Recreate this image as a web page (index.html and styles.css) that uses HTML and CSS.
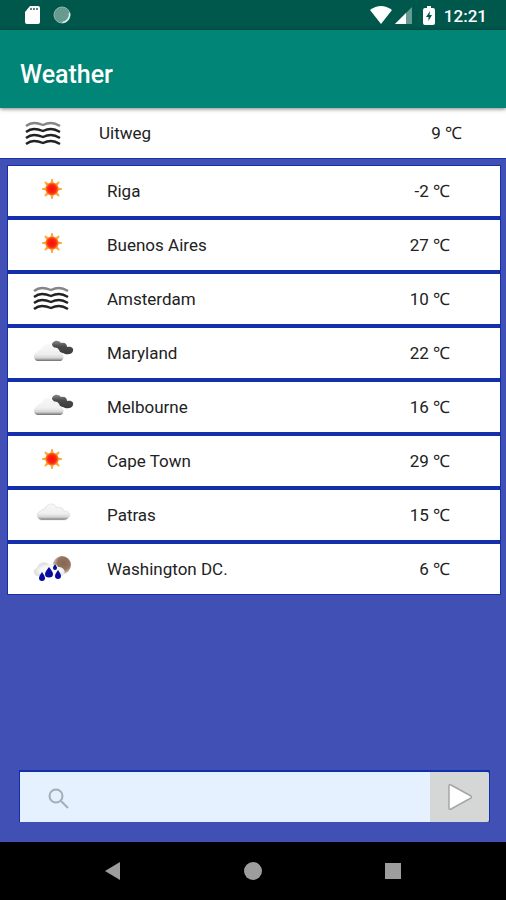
FILE: index.html
```html
<!DOCTYPE html>
<html lang="en">
<head>
<meta charset="utf-8">
<meta name="viewport" content="width=device-width, initial-scale=1">
<title>Weather</title>
<link rel="stylesheet" href="styles.css">
</head>
<body>
<svg class="defs" width="0" height="0" aria-hidden="true">
  <defs>
    <linearGradient id="cloudFill" x1="0" y1="0" x2="0" y2="1">
      <stop offset="0" stop-color="#f8f8f8"/><stop offset=".6" stop-color="#efefef"/><stop offset=".82" stop-color="#d4d4d4"/><stop offset="1" stop-color="#6e6e6e"/>
    </linearGradient>
    <linearGradient id="darkFill" x1="0" y1="0" x2="0" y2="1">
      <stop offset="0" stop-color="#8a8a8a"/><stop offset=".4" stop-color="#4c4c4c"/><stop offset="1" stop-color="#3a3a3a"/>
    </linearGradient>
    <radialGradient id="sunFill"><stop offset="0" stop-color="#f80d08"/><stop offset=".65" stop-color="#fb2a10"/><stop offset="1" stop-color="#ff8a1c"/></radialGradient>
    <radialGradient id="moonFill" cx=".6" cy=".4"><stop offset="0" stop-color="#846552"/><stop offset=".7" stop-color="#96745f"/><stop offset="1" stop-color="#bfa899"/></radialGradient>
    <radialGradient id="puffFill" cx=".55" cy=".6"><stop offset="0" stop-color="#fff"/><stop offset=".7" stop-color="#f5f5f5"/><stop offset="1" stop-color="#e2e2e2"/></radialGradient>
    <symbol id="mist" viewBox="0 0 44 30">
      <g fill="none" stroke="#222" stroke-width="2.400">
        <path stroke="#858585" d="M4 8Q8 5 12 5T21 7Q25 5 29 5T38 8"/>
        <path d="M4 14Q8 11 12 11T21 13Q25 11 29 11T38 14"/>
        <path d="M4 20Q8 17 12 17T21 19Q25 17 29 17T38 20"/>
        <path d="M4 26Q8 23 12 23T21 25Q25 23 29 23T38 26"/>
      </g>
    </symbol>
    <symbol id="sun" viewBox="0 0 44 30">
      <g fill="#f9a63c" stroke="#f9a63c" stroke-linejoin="round">
        <path id="ray" d="M22 4l1.500 5h-3z"/>
        <use href="#ray" transform="rotate(45 22 14)"/><use href="#ray" transform="rotate(90 22 14)"/>
        <use href="#ray" transform="rotate(135 22 14)"/><use href="#ray" transform="rotate(180 22 14)"/>
        <use href="#ray" transform="rotate(225 22 14)"/><use href="#ray" transform="rotate(270 22 14)"/>
        <use href="#ray" transform="rotate(315 22 14)"/>
      </g>
      <circle cx="22" cy="14" r="6.500" fill="url(#sunFill)"/>
    </symbol>
    <symbol id="overcast" viewBox="0 0 44 30">
      <path fill="url(#darkFill)" d="M22 8c0-4 6-6 9-2 4-1 6 1 6 4 4-1 7 1 6 4-1 4-7 4-10 2-3 0-5-2-6-5-3 0-5-1-5-3z"/>
      <path fill="url(#cloudFill)" d="M7 24c-4-1-4-8 0-9 1-2 3-3 5-3 1-6 10-7 12-1 3-1 5 1 6 4 4 1 5 7 1 9z"/>
    </symbol>
    <symbol id="cloud" viewBox="0 0 44 30">
      <path fill="url(#cloudFill)" stroke="#d8d8d8" stroke-width=".6" d="M11 21c-5-1-5-8 0-9 1-2 3-2 4-2 1-6 10-7 12-1 3-2 6 0 7 3 5 0 7 3 5 6-1 2-3 3-5 3z"/>
    </symbol>
    <symbol id="rain" viewBox="0 0 44 30">
      <g transform="translate(0 2)">
        <circle cx="32" cy="10" r="9" fill="url(#moonFill)"/>
        <path fill="url(#puffFill)" d="M8 21c-5 0-6-7-1-8 1-6 9-8 13-3 3-2 7-1 8 2 5-1 9 5 5 8-2 2-5 1-7 1z"/>
        <g fill="#080b9b">
          <path d="M19 12q4 5 4 7a4 3.500 0 0 1-8 0q0-2 4-7z"/>
          <path d="M12 17q3 4 3 6a3 3 0 0 1-6 0q0-2 3-6z"/>
          <path d="M28 15q3 4 3 6a3 3 0 0 1-6 0q0-2 3-6z"/>
          <path d="M25 9q2 3 2 4a2 2 0 0 1-4 0q0-1 2-4z"/>
        </g>
      </g>
    </symbol>
  </defs>
</svg>

<div class="status">
  <svg width="16" height="20" viewBox="0 0 16 20" aria-hidden="true"><path fill="#fff" d="M6 1h8q2 0 2 2v14q0 2-2 2H3q-2 0-2-2V7z"/><path stroke="#60857d" stroke-width="2" stroke-dasharray="2 1" d="M6 4h8"/></svg>
  <svg class="sync" width="18" height="18" viewBox="0 0 18 18" aria-hidden="true"><circle cx="9" cy="9" r="8" fill="#689b90" stroke="#8fb5ad"/><path d="M16.500 7a8 8 0 0 1-7 9.500" fill="none" stroke="#e6f2ef" stroke-width="1.500"/></svg>
  <span class="spacer"></span>
  <svg width="22" height="18" viewBox="0 0 22 18" aria-hidden="true"><path fill="#fff" d="M0 4Q11-4 22 4L11 18z"/></svg>
  <svg class="signal" width="17" height="17" viewBox="0 0 17 17" aria-hidden="true"><path fill="#659b91" d="M17 0v17H0z"/><path fill="#fff" d="M11 6v11H0z"/></svg>
  <svg class="battery" width="12" height="19" viewBox="0 0 12 19" aria-hidden="true"><path fill="#fff" d="M4 0h4v2h2q2 0 2 2v13q0 2-2 2H2q-2 0-2-2V4q0-2 2-2h2z"/><path fill="#00574b" d="M7 5L3 11h2.500v4L9 9H6.500z"/></svg>
  <time>12:21</time>
</div>

<header class="appbar"><h1>Weather</h1></header>

<section class="row current">
  <svg class="icon" role="img" aria-label="Mist"><use href="#mist"/></svg>
  <span class="city">Uitweg</span><span class="temp">9 ℃</span>
</section>

<main>
  <ul class="cities">
    <li class="row"><svg class="icon" role="img" aria-label="Sunny"><use href="#sun"/></svg><span class="city">Riga</span><span class="temp">-2 ℃</span></li>
    <li class="row"><svg class="icon" role="img" aria-label="Sunny"><use href="#sun"/></svg><span class="city">Buenos Aires</span><span class="temp">27 ℃</span></li>
    <li class="row"><svg class="icon" role="img" aria-label="Mist"><use href="#mist"/></svg><span class="city">Amsterdam</span><span class="temp">10 ℃</span></li>
    <li class="row"><svg class="icon" role="img" aria-label="Overcast"><use href="#overcast"/></svg><span class="city">Maryland</span><span class="temp">22 ℃</span></li>
    <li class="row"><svg class="icon" role="img" aria-label="Overcast"><use href="#overcast"/></svg><span class="city">Melbourne</span><span class="temp">16 ℃</span></li>
    <li class="row"><svg class="icon" role="img" aria-label="Sunny"><use href="#sun"/></svg><span class="city">Cape Town</span><span class="temp">29 ℃</span></li>
    <li class="row"><svg class="icon" role="img" aria-label="Cloudy"><use href="#cloud"/></svg><span class="city">Patras</span><span class="temp">15 ℃</span></li>
    <li class="row"><svg class="icon" role="img" aria-label="Rain"><use href="#rain"/></svg><span class="city">Washington DC.</span><span class="temp">6 ℃</span></li>
  </ul>
  <form class="search">
    <label class="field">
      <svg width="22" height="22" viewBox="0 0 22 22" aria-hidden="true"><g fill="none" stroke="#a3adb8" stroke-width="2"><circle cx="8" cy="8" r="6.500"/><path d="M13 13l7 7"/></g></svg>
      <input type="text" aria-label="Search city">
    </label>
    <button type="button" aria-label="Search"><svg width="26" height="28" viewBox="0 0 26 28" aria-hidden="true"><path fill="#fff" stroke="#a6a6a6" stroke-width="1.500" stroke-linejoin="round" d="M2 3q0-2 2-1l20 11q1 1 0 2L4 26q-2 1-2-1z"/></svg></button>
  </form>
</main>

<nav class="navbar">
  <button type="button" aria-label="Back"><svg width="18" height="18" viewBox="0 0 18 18"><path d="M16 0v18L1 9z"/></svg></button>
  <button type="button" aria-label="Home"><svg width="18" height="18" viewBox="0 0 18 18"><circle cx="9" cy="9" r="9"/></svg></button>
  <button type="button" aria-label="Recents"><svg width="18" height="18" viewBox="0 0 18 18"><path d="M1 1h16v16H1z"/></svg></button>
</nav>
</body>
</html>
```

FILE: styles.css
```css
* { box-sizing: border-box; }

body {
  margin: 0;
  min-height: 100vh;
  display: flex;
  flex-direction: column;
  background: #4050b5;
  color: #222;
  font-family: Roboto, "Noto Sans", sans-serif;
  font-size: 17px;
  line-height: 20px;
}

.defs { position: absolute; }

svg { display: block; flex: none; }

.status {
  height: 30px;
  padding: 0 19px 0 24px;
  display: flex;
  align-items: center;
  background: #00574b;
  color: #fff;
  font-weight: 500;
}
.sync { margin-left: 13px; }
.spacer { flex: 1; }
.signal { margin-left: 3px; }
.battery { margin: 0 9px 0 11px; }
.status time { padding-top: 2px; }

.appbar {
  height: 78px;
  padding: 12px 20px 0;
  display: flex;
  align-items: center;
  background: #008577;
  box-shadow: 0 1px 4px rgba(0, 0, 0, .5);
  z-index: 1;
}
h1 {
  margin: 0;
  color: #fff;
  font-size: 25px;
  font-weight: 500;
}

.row {
  height: 50px;
  padding: 0 50px 0 22px;
  display: flex;
  align-items: center;
  background: #fff;
}
.current { padding: 0 44px 0 22px; }
.icon { width: 44px; height: 30px; }
.city { flex: 1; margin-left: 33px; }

main {
  flex: 1;
  padding: 7px 6px 20px 8px;
  display: flex;
  flex-direction: column;
  justify-content: space-between;
  border-top: 1px solid #1735a8;
}
.cities {
  margin: 0;
  padding: 0;
  list-style: none;
  display: grid;
  gap: 4px;
  background: #1330aa;
  box-shadow: 0 0 0 1px #1330aa;
}
.cities .icon { margin: 0 0 2px; }

.search {
  margin: 0 11px 0 12px;
  height: 50px;
  display: flex;
  box-shadow: 0 -1px 0 1px #1330aa;
}
.field {
  flex: 1;
  padding: 4px 12px 0 28px;
  display: flex;
  align-items: center;
  gap: 12px;
  background: #e5f1ff;
}
.field input {
  flex: 1;
  min-width: 0;
  border: 0;
  outline: 0;
  background: transparent;
  font: inherit;
}
.search button {
  width: 59px;
  padding: 0;
  display: grid;
  place-items: center;
  border: 0;
  border-radius: 0 2px 2px 0;
  background: #d5d7d6;
}

.navbar {
  height: 58px;
  padding: 0 43px;
  display: grid;
  grid-template-columns: repeat(3, 1fr);
  background: #000;
}
.navbar button {
  padding: 0;
  display: grid;
  place-items: center;
  border: 0;
  background: transparent;
}
.navbar svg { fill: #9d9d9d; }
```
